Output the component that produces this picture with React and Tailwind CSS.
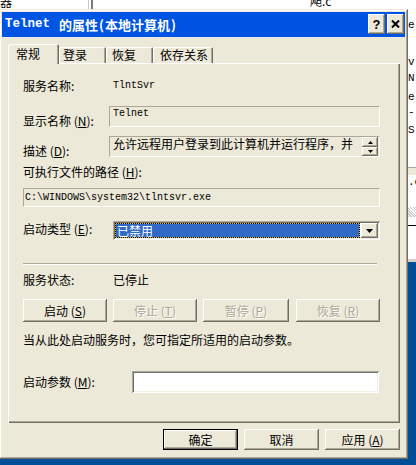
import React from 'react';

const cjk = "font-['Noto_Sans_CJK_SC',sans-serif]";
const mono = "font-['Liberation_Mono','Noto_Sans_CJK_SC',monospace]";
const raised = "shadow-[inset_-1px_-1px_#716f64,inset_1px_1px_#fff,inset_-2px_-2px_#aca899]";
const raisedDef = "shadow-[inset_0_0_0_1px_#000,inset_-2px_-2px_#716f64,inset_2px_2px_#fff,inset_-3px_-3px_#aca899]";
const sunken = "shadow-[inset_1px_1px_#aca899,inset_-1px_-1px_#fff,inset_2px_2px_#716f64,inset_-2px_-2px_#f1efe2]";
const etched = "border border-t-[#aca899] border-l-[#aca899] border-r-white border-b-white";

const Acc = ({ k }) => (
    <>
        (<u className="underline-offset-[1px]">{k}</u>)
    </>
);

const Btn = ({ children, className = '', disabled, def }) => (
    <div
        className={`flex items-center justify-center bg-[#ece9d8] text-[12px] leading-[14px] ${def ? raisedDef : raised} ${
            disabled ? 'text-[#aca899] [text-shadow:1px_1px_0_#fff]' : 'text-black'
        } ${className}`}
    >
        {children}
    </div>
);

const Arrow = ({ up, w = 5, h = 3 }) => (
    <svg width={w} height={h} viewBox={`0 0 ${w} ${h}`}>
        <polygon points={up ? `${w / 2},0 ${w},${h} 0,${h}` : `0,0 ${w},0 ${w / 2},${h}`} fill="#000" />
    </svg>
);

const Tab = ({ label, active, className = '' }) => (
    <div
        className={`bg-[#ece9d8] text-[12px] leading-[14px] rounded-t-[2px] shadow-[inset_1px_1px_#fff,inset_-1px_0_#716f64,inset_-2px_0_#aca899] ${
            active ? 'h-[20px] pt-[3px]' : 'h-[16px] mb-px pt-px'
        } ${className}`}
    >
        {label}
    </div>
);

const Dialog = () => (
    <div className="absolute left-[-1px] top-[9px] w-[409px] h-[450px] border border-t-[#ece9d8] border-l-[#ece9d8] border-r-[#716f64] border-b-[#716f64]">
        <div className={`h-full flex flex-col p-px bg-[#ece9d8] border border-t-white border-l-white border-r-[#aca899] border-b-[#aca899] ${cjk} text-black`}>
            {/* title bar */}
            <div className="h-[25px] bg-[#0054e3] flex items-start pl-[3px] pr-px">
                <div className="flex-1 flex items-center h-[25px] text-white font-bold text-[13px] whitespace-nowrap">
                    <span className={`${mono} text-[12.5px]`}>Telnet</span>
                    <span className="ml-[9px]">的属性</span>
                    <span className="inline-block w-[7px] text-center">(</span>
                    <span>本地计算机</span>
                    <span className="inline-block w-[7px] text-center">)</span>
                </div>
                <div className={`mt-[2px] w-[17px] h-[20px] flex items-center justify-center bg-[#ece9d8] ${raised} font-['Liberation_Sans',sans-serif] font-bold text-[13px] leading-none`}>
                    ?
                </div>
                <div className={`mt-[2px] ml-[2px] w-[17px] h-[20px] flex items-center justify-center bg-[#ece9d8] ${raised}`}>
                    <svg width="9" height="8" viewBox="0 0 9 8">
                        <path d="M1 0.5 L8 7.5 M8 0.5 L1 7.5" stroke="#000" strokeWidth="2" />
                    </svg>
                </div>
            </div>

            {/* tabs */}
            <div className="flex items-end h-[20px] mt-[7px] ml-[6px] relative z-10">
                <Tab label="常规" active className="w-[51px] pl-[8px]" />
                <Tab label="登录" className="w-[47px] pl-[4px]" />
                <Tab label="恢复" className="w-[47px] pl-[6px]" />
                <Tab label="依存关系" className="w-[60px] pl-[7px]" />
            </div>

            {/* panel */}
            <div className="ml-[6px] mt-[-1px] w-[392px] h-[360px] shadow-[inset_1px_1px_#fff,inset_-1px_-1px_#716f64,inset_-2px_-2px_#aca899] flex flex-col pl-[15px] text-[12px] leading-[14px]">
                <div className="mt-[16px] flex items-center h-[14px]">
                    <span className="w-[90px]">服务名称:</span>
                    <span className={`${mono} text-[10px]`}>TlntSvr</span>
                </div>

                <div className="mt-[13px] flex h-[21px]">
                    <span className="w-[86px] pt-[8px]">
                        显示名称 <Acc k="N" />:
                    </span>
                    <div className={`${etched} w-[271px] h-[21px] pl-[3px] ${mono} text-[10px] leading-[14px]`}>Telnet</div>
                </div>

                <div className="mt-[9px] flex h-[21px]">
                    <span className="w-[86px] pt-[8px]">
                        描述 <Acc k="D" />:
                    </span>
                    <div className={`${etched} w-[271px] h-[21px] pl-[3px] flex`}>
                        <span className="flex-1 leading-[14px] whitespace-nowrap overflow-hidden">
                            允许远程用户登录到此计算机并运行程序，并
                        </span>
                        <div className="flex flex-col mr-px">
                            <div className={`w-[16px] h-[10px] flex items-center justify-center bg-[#ece9d8] ${raised}`}>
                                <Arrow up />
                            </div>
                            <div className={`w-[16px] h-[9px] flex items-center justify-center bg-[#ece9d8] ${raised}`}>
                                <Arrow />
                            </div>
                        </div>
                    </div>
                </div>

                <div className="mt-[8px] h-[14px]">
                    可执行文件的路径 <Acc k="H" />:
                </div>

                <div className={`mt-[9px] ${etched} w-[357px] h-[19px] pl-px flex items-center ${mono} text-[10px]`}>
                    C:\WINDOWS\system32\tlntsvr.exe
                </div>

                <div className="mt-[14px] flex h-[19px]">
                    <span className="w-[90px] pt-px">
                        启动类型 <Acc k="E" />:
                    </span>
                    <div className={`w-[267px] h-[19px] bg-white ${sunken} flex items-start p-[2px]`}>
                        <div className="flex-1 h-[15px] bg-[#d8b050] border border-dotted border-black">
                            <div className="h-full bg-[#316ac5] text-white leading-[13px] pl-[1px]">已禁用</div>
                        </div>
                        <div className={`ml-px w-[17px] h-[15px] flex items-center justify-center bg-[#ece9d8] ${raised}`}>
                            <Arrow w={7} h={4} />
                        </div>
                    </div>
                </div>

                <div className="mt-[23px] w-[354px] h-[2px] border-t border-t-[#aca899] border-b border-b-white" />

                <div className="mt-[8px] flex h-[14px]">
                    <span className="w-[90px]">服务状态:</span>
                    <span>已停止</span>
                </div>

                <div className="mt-[12px] flex h-[23px]">
                    <Btn className="w-[84px] h-[23px]">
                        启动 <Acc k="S" />
                    </Btn>
                    <Btn disabled className="ml-[6px] w-[84px] h-[23px]">
                        停止 <Acc k="T" />
                    </Btn>
                    <Btn disabled className="ml-[6px] w-[86px] h-[23px]">
                        暂停 <Acc k="P" />
                    </Btn>
                    <Btn disabled className="ml-[7px] w-[84px] h-[23px]">
                        恢复 <Acc k="R" />
                    </Btn>
                </div>

                <div className="mt-[11px] h-[14px] whitespace-nowrap">当从此处启动服务时，您可指定所适用的启动参数。</div>

                <div className="mt-[24px] flex h-[22px]">
                    <span className="w-[109px] pt-[4px]">
                        启动参数 <Acc k="M" />:
                    </span>
                    <div className={`w-[247px] h-[22px] bg-white ${sunken}`} />
                </div>
            </div>

            {/* bottom buttons */}
            <div className="mt-[6px] w-[398px] flex justify-end gap-[6px] text-[12px]">
                <Btn def className="w-[75px] h-[21px]">
                    确定
                </Btn>
                <Btn className="w-[75px] h-[21px]">取消</Btn>
                <Btn className="w-[75px] h-[21px]">
                    应用 <Acc k="A" />
                </Btn>
            </div>
        </div>
    </div>
);

const App = () => {
    return (
        <div className={`relative w-[416px] h-[465px] overflow-hidden bg-white ${cjk}`}>
            {/* background window peeking out */}
            <div className="absolute left-0 top-[-5px] text-[12px] leading-[14px] text-black">器</div>
            <div className="absolute left-[88px] top-0 w-px h-[10px] bg-[#c8c8c8]" />
            <div className="absolute left-[91px] top-0 w-[2px] h-[10px] bg-[#7a7a7a]" />
            <div className="absolute left-[310px] top-[-6px] text-[12px] leading-[14px] text-black">飐.c</div>

            <div className={`absolute left-[408px] top-0 w-[8px] h-[262px] bg-white text-[11px] leading-[12px] text-black ${mono}`}>
                <div className="absolute left-0 top-[19px]">e.</div>
                <div className="absolute left-0 top-[56px]">v.</div>
                <div className="absolute left-0 top-[72px]">N.</div>
                <div className="absolute left-0 top-[91px]">e.</div>
                <div className="absolute left-0 top-[106px]">-</div>
                <div className="absolute left-0 top-[124px]">S.</div>
                <div className="absolute left-0 top-[167px] w-full h-[8px] bg-[#ece9d8] border-t border-t-[#aca899]" />
                <div className="absolute left-0 top-[176px]">.c</div>
                <div className="absolute left-0 top-[207px] w-full h-[10px] bg-[repeating-linear-gradient(45deg,#c8c8c8_0_1px,#fff_1px_2px)]" />
                <div className="absolute left-0 top-[225px] w-full h-px bg-black" />
                <div className="absolute left-0 top-[259px] w-full h-[3px] bg-[#d4d0c8]" />
            </div>

            {/* desktop */}
            <div className="absolute left-[408px] top-[262px] w-[8px] h-[203px] bg-[#004e98]" />
            <div className="absolute left-0 top-[459px] w-[416px] h-[6px] bg-[#004e98]" />

            <Dialog />
        </div>
    );
};

export default App;
